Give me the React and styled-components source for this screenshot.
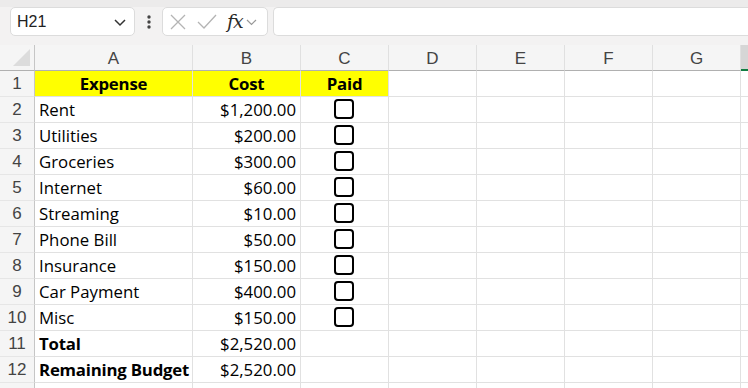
import React from 'react';
import styled, { createGlobalStyle } from 'styled-components';

const Global = createGlobalStyle`
	html, body {
		margin: 0;
		padding: 0;
		background: #ffffff;
		overflow: hidden;
	}
	body {
		font-family: "Open Sans", "Liberation Sans", sans-serif;
	}
`;

const Page = styled.div`
	width: 748px;
	height: 388px;
	overflow: hidden;
	display: flex;
	flex-direction: column;
`;

const Toolbar = styled.div`
	flex: none;
	height: 45px;
	box-sizing: border-box;
	padding: 0 0 0 10px;
	background: #f3f2f2;
	display: flex;
	align-items: flex-start;
	border-top: 7px solid #ecebeb;
`;

const Box = styled.div`
	height: 29px;
	box-sizing: border-box;
	background: #ffffff;
	border: 1px solid #dcdcdc;
	border-radius: 5px;
	display: flex;
	align-items: center;
	width: ${(p) => p.w || 'auto'};
	flex: ${(p) => (p.grow ? 1 : 'none')};
	margin-right: ${(p) => p.mr || '0'};
	border-right: ${(p) => (p.open ? 'none' : '1px solid #dcdcdc')};
	border-top-right-radius: ${(p) => (p.open ? '0' : '5px')};
	border-bottom-right-radius: ${(p) => (p.open ? '0' : '5px')};
`;

const NameText = styled.span`
	font-family: "Liberation Sans", sans-serif;
	font-size: 16px;
	color: #222;
	padding-left: 6px;
	flex: 1;
`;

const Dots = styled.div`
	width: 27px;
	display: flex;
	justify-content: center;
	align-items: center;
	height: 29px;
`;

const Fx = styled.span`
	font-family: "DejaVu Serif", "Liberation Serif", serif;
	font-style: italic;
	font-size: 19px;
	color: #2a2a2a;
	margin-left: 10px;
	letter-spacing: -1px;
	margin-top: -2px;
`;

const Grid = styled.div`
	flex: none;
	display: grid;
	grid-template-columns: 35px 158px 108px 88px 88px 88px 88px 88px 1fr;
	grid-auto-rows: 26px;
`;

const ColHead = styled.div`
	box-sizing: border-box;
	background: ${(p) => (p.sel ? '#d6d6d6' : '#f5f5f5')};
	border-right: 1px solid #e0e0e0;
	border-bottom: ${(p) => (p.sel ? '2px solid #107c41' : '1px solid #b0b0b0')};
	display: flex;
	align-items: center;
	justify-content: center;
	font-family: "Liberation Sans", sans-serif;
	font-size: 17px;
	color: #444;
	padding-top: 2px;
`;

const Corner = styled(ColHead)`
	position: relative;
	border-right: 1px solid #c6c6c6;
	&::after {
		content: '';
		position: absolute;
		right: 4px;
		bottom: 4px;
		width: 0;
		height: 0;
		border-left: 17px solid transparent;
		border-bottom: 17px solid #dcdcdc;
	}
`;

const RowHead = styled.div`
	box-sizing: border-box;
	background: #f5f5f5;
	border-right: 1px solid #c6c6c6;
	border-bottom: 1px solid #e6e6e6;
	display: flex;
	align-items: center;
	justify-content: center;
	font-family: "Liberation Sans", sans-serif;
	font-size: 17px;
	color: #444;
`;

const Cell = styled.div`
	box-sizing: border-box;
	border-right: 1px solid #e1e1e1;
	border-bottom: 1px solid #e1e1e1;
	background: ${(p) => (p.fill ? '#ffff00' : '#ffffff')};
	display: flex;
	align-items: center;
	justify-content: ${(p) => (p.align === 'right' ? 'flex-end' : p.align === 'center' ? 'center' : 'flex-start')};
	padding: 0 4px 1px 4px;
	font-size: 16.8px;
	font-weight: ${(p) => (p.bold ? 700 : 400)};
	letter-spacing: ${(p) => (p.bold ? '-0.2px' : '0')};
	color: #000;
	white-space: nowrap;
	overflow: visible;
`;

const Check = styled.span`
	width: 20px;
	height: 20px;
	box-sizing: border-box;
	border: 2.5px solid #000;
	border-radius: 4px;
	margin-left: -1px;
`;

const cols = ['A', 'B', 'C', 'D', 'E', 'F', 'G', ''];

const rows = [
	['Rent', '$1,200.00', true],
	['Utilities', '$200.00', true],
	['Groceries', '$300.00', true],
	['Internet', '$60.00', true],
	['Streaming', '$10.00', true],
	['Phone Bill', '$50.00', true],
	['Insurance', '$150.00', true],
	['Car Payment', '$400.00', true],
	['Misc', '$150.00', true],
	['Total', '$2,520.00', false, true],
	['Remaining Budget', '$2,520.00', false, true],
];

function Empty() {
	return [0, 1, 2, 3, 4].map((i) => <Cell key={'e' + i} />);
}

export default function App() {
	return (
		<Page>
			<Global />
			<Toolbar>
				<Box w="125px">
					<NameText>H21</NameText>
					<svg width="14" height="10" viewBox="0 0 14 10" style={{ marginRight: 7 }}>
						<path d="M2 3 L7 8 L12 3" fill="none" stroke="#333" strokeWidth="1.5" />
					</svg>
				</Box>
				<Dots>
					<svg width="4" height="14" viewBox="0 0 4 14">
						<circle cx="2" cy="2" r="1.7" fill="#444" />
						<circle cx="2" cy="7" r="1.7" fill="#444" />
						<circle cx="2" cy="12" r="1.7" fill="#444" />
					</svg>
				</Dots>
				<Box w="106px" mr="5px">
					<svg width="16" height="16" viewBox="0 0 16 16" style={{ marginLeft: 7 }}>
						<path d="M1 1 L15 15 M15 1 L1 15" stroke="#b4b4b4" strokeWidth="1.3" />
					</svg>
					<svg width="20" height="16" viewBox="0 0 20 16" style={{ marginLeft: 11 }}>
						<path d="M1 8 L7 14 L19 1" fill="none" stroke="#b4b4b4" strokeWidth="1.3" />
					</svg>
					<Fx>fx</Fx>
					<svg width="11" height="8" viewBox="0 0 11 8" style={{ marginLeft: 3 }}>
						<path d="M1 2 L5.5 6.5 L10 2" fill="none" stroke="#999" strokeWidth="1.2" />
					</svg>
				</Box>
				<Box grow open />
			</Toolbar>
			<Grid>
				<Corner />
				{cols.map((c, i) => (
					<ColHead key={'h' + i} sel={i === 7}>{c}</ColHead>
				))}

				<RowHead>1</RowHead>
				<Cell fill align="center" bold>Expense</Cell>
				<Cell fill align="center" bold>Cost</Cell>
				<Cell fill align="center" bold>Paid</Cell>
				{Empty()}

				{rows.map((r, i) => (
					<React.Fragment key={'r' + i}>
						<RowHead>{i + 2}</RowHead>
						<Cell bold={r[3]}>{r[0]}</Cell>
						<Cell align="right">{r[1]}</Cell>
						<Cell align="center">{r[2] && <Check />}</Cell>
						{Empty()}
					</React.Fragment>
				))}
				<RowHead />
				<Cell />
				<Cell />
				<Cell />
				{Empty()}
			</Grid>
		</Page>
	);
}
